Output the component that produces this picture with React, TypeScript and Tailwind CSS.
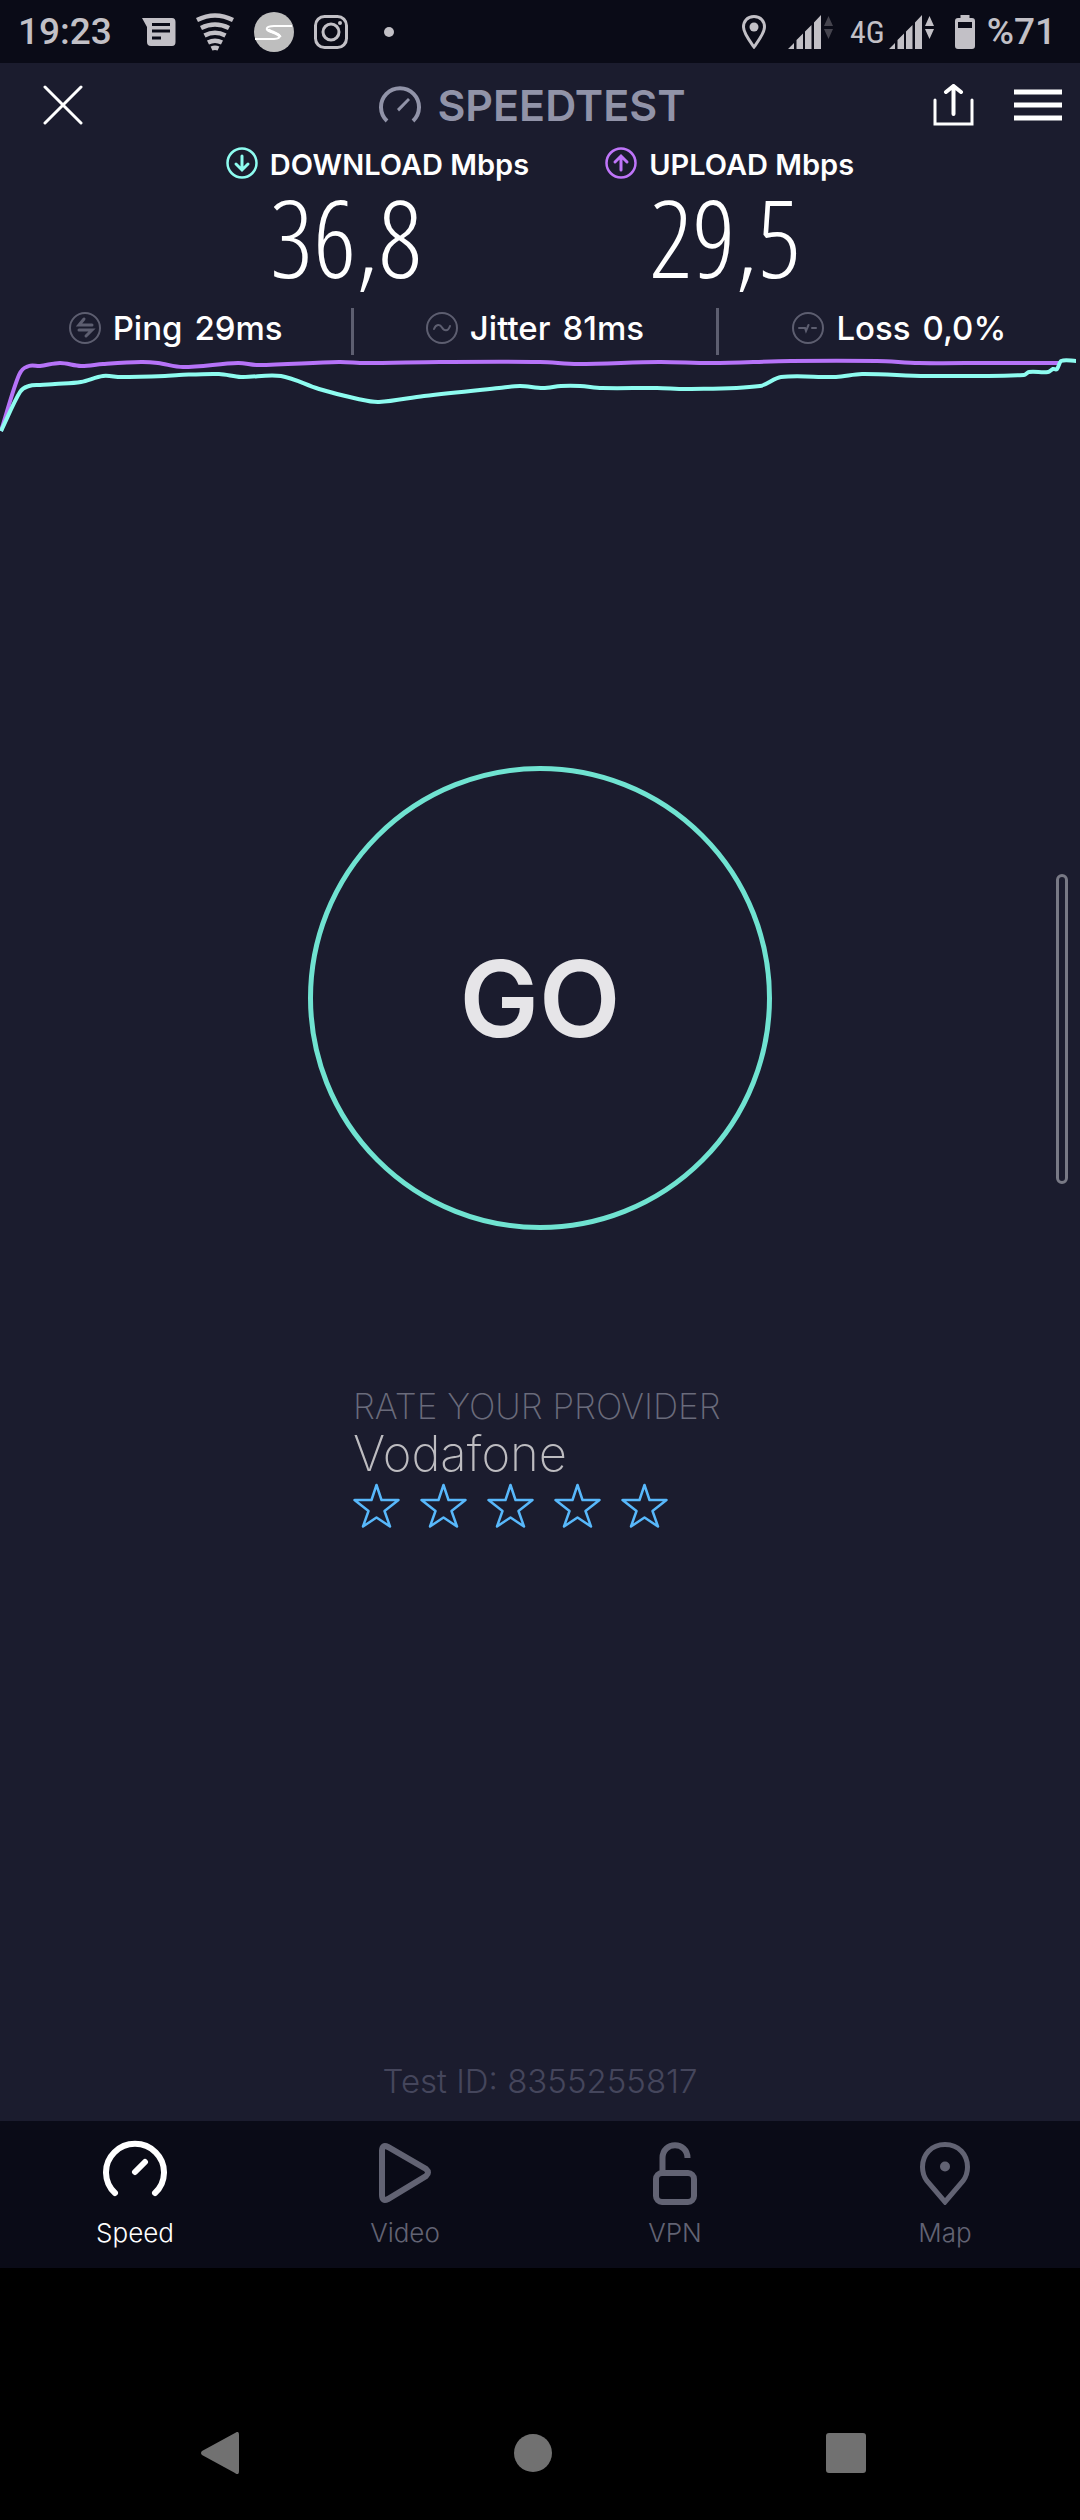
import type { ReactNode } from 'react'

type Point = [number, number]

const uploadPoints: Point[] = [
  [1, 431], [19, 375], [29, 366], [40, 366], [60, 363], [81, 366], [103, 364], [141, 362], [158, 363],
  [183, 367], [238, 363], [258, 365], [339, 362], [365, 363], [440, 362], [540, 362], [578, 364], [659, 362],
  [712, 363], [791, 361], [877, 361], [919, 363], [988, 363], [1060, 363],
]

const downloadPoints: Point[] = [
  [1, 431], [20, 392], [29, 386], [40, 385], [55, 384], [81, 382], [103, 376], [121, 377], [165, 376],
  [179, 375], [219, 374], [241, 377], [281, 376], [319, 389], [358, 399], [379, 402], [424, 396], [499, 388],
  [520, 386], [543, 388], [561, 386], [580, 386], [602, 388], [657, 388], [688, 389], [760, 386], [781, 377],
  [836, 377], [862, 374], [926, 376], [1024, 375], [1029, 372], [1048, 372], [1053, 369], [1057, 369],
  [1061, 361], [1076, 361],
]

function smoothPath(points: Point[]) {
  let d = `M${points[0][0]} ${points[0][1]}`
  for (let i = 1; i < points.length; i++) {
    const [x0, y0] = points[i - 1]
    const [x1, y1] = points[i]
    const dx = (x1 - x0) / 3
    const before = points[Math.max(i - 2, 0)]
    const after = points[Math.min(i + 1, points.length - 1)]
    const s0 = (y1 - before[1]) / (x1 - before[0])
    const s1 = (after[1] - y0) / (after[0] - x0)
    d += `C${x0 + dx} ${y0 + s0 * dx} ${x1 - dx} ${y1 - s1 * dx} ${x1} ${y1}`
  }
  return d
}

function SignalIcon({ active }: { active: boolean }) {
  return (
    <svg width="46" height="34" viewBox="0 0 46 34" fill="#c2c0c6" aria-hidden="true">
      <path d="M0 34L6 28V34ZM8.500 34V25L15 18.500V34ZM17 34V16.500L23.500 10V34ZM26 34V7.500L33 0V34Z" />
      <path d="M40.500 1L45 11H36ZM36 14H45L40.500 24Z" fill={active ? '#c2c0c6' : '#45444e'} />
    </svg>
  )
}

function StatusBar() {
  return (
    <div className="flex h-[63px] items-center bg-[#0a0b17] pl-[18px] pr-6 font-[Roboto,sans-serif] text-[37px] font-medium leading-none text-[#c2c0c6]">
      <span>19:23</span>
      <svg className="ml-[30px]" width="34" height="28" viewBox="0 0 34 28" aria-hidden="true">
        <path d="M0 0H30Q33.500 0 33.500 4V24Q33.500 28 30 28H9Q5 28 5 24V9Z" fill="#c2c0c6" />
        <path d="M10 6.500H28M10 13H28M10 20H19" stroke="#0a0b17" strokeWidth="3" />
      </svg>
      <svg className="ml-5" width="38" height="38" viewBox="0 0 38 38" fill="none" stroke="#c2c0c6" strokeWidth="4.500" aria-hidden="true">
        <path d="M1 7Q19 -2 37 7M5 15Q19 8 33 15M8.500 22.500Q19 17 29.500 22.500M12 29.500Q19 26 26 29.500M15.500 35.500Q19 34 22.500 35.500" />
      </svg>
      <svg className="ml-5" width="40" height="40" viewBox="0 0 40 40" aria-hidden="true">
        <circle cx="20" cy="20" r="20" fill="#bebebe" />
        <path d="M38 14H20C12 14 10 18 17 20C27 22 29 26 20 27H1" fill="none" stroke="#fff" strokeWidth="2" />
        <path d="M14 17C14 19 26 22 26 25" fill="none" stroke="#fff" strokeWidth="3" />
      </svg>
      <svg className="ml-5" width="34" height="34" viewBox="0 0 34 34" fill="none" stroke="#c2c0c6" strokeWidth="3" aria-hidden="true">
        <rect x="1.500" y="1.500" width="31" height="31" rx="9" />
        <circle cx="17" cy="17" r="8" />
        <circle cx="26" cy="8" r="2" fill="#c2c0c6" stroke="none" />
      </svg>
      <span className="ml-9 size-[10px] rounded-full bg-[#c2c0c6]" />

      <svg className="ml-auto" width="24" height="34" viewBox="0 0 24 34" aria-hidden="true">
        <path d="M12 1.500C5 1.500 1.500 6.500 1.500 12C1.500 18 7 25 12 32C17 25 22.500 18 22.500 12C22.500 6.500 19 1.500 12 1.500Z" fill="none" stroke="#c2c0c6" strokeWidth="3" />
        <circle cx="12" cy="12" r="4.500" fill="#c2c0c6" />
      </svg>
      <span className="ml-[22px]"><SignalIcon active={false} /></span>
      <span className="ml-4 font-['Roboto_Condensed',Roboto,sans-serif] text-[32px] font-normal">4G</span>
      <span className="ml-1"><SignalIcon active /></span>
      <svg className="ml-5" width="20" height="34" viewBox="0 0 20 34" fill="#c2c0c6" aria-hidden="true">
        <path fillRule="evenodd" d="M5.500 0H14.500V3H17Q20 3 20 6V31Q20 34 17 34H3Q0 34 0 31V6Q0 3 3 3H5.500ZM3 7V13H17V7Z" />
      </svg>
      <span className="ml-3">%71</span>
    </div>
  )
}

function Header() {
  return (
    <header className="flex h-[84px] items-center pl-[43px] pr-[18px]">
      <div className="flex-1">
        <button aria-label="Close" className="block">
          <svg width="40" height="40" viewBox="0 0 40 40" stroke="#fff" strokeWidth="3" strokeLinecap="round">
            <path d="M2 2L38 38M38 2L2 38" />
          </svg>
        </button>
      </div>
      <h1 className="flex items-center gap-4 pr-10 text-[43px] font-semibold leading-none text-[#9193a8]">
        <svg width="42" height="38" viewBox="0 0 42 38" fill="none" stroke="#9193a8" strokeWidth="4" aria-hidden="true">
          <path d="M8 35A19 19 0 1 1 34 35" />
          <path d="M18 23L29 12L31 14L20 25.500Z" fill="#9193a8" stroke="none" />
        </svg>
        SPEEDTEST
      </h1>
      <div className="flex flex-1 justify-end gap-10">
        <button aria-label="Share">
          <svg width="41" height="42" viewBox="0 0 41 42" fill="none" stroke="#fff" strokeWidth="4" strokeLinecap="round">
            <path d="M2 16V40H39V16" strokeWidth="3" />
            <path d="M20.500 30V3M13 8L20.500 2L28 8" />
          </svg>
        </button>
        <button aria-label="Menu">
          <svg width="48" height="34" viewBox="0 0 48 34" stroke="#fff" strokeWidth="5">
            <path d="M0 4H48M0 17H48M0 30H48" />
          </svg>
        </button>
      </div>
    </header>
  )
}

function SpeedResult({ label, value, color, arrow }: { label: string; value: string; color: string; arrow: string }) {
  return (
    <div className="flex gap-3">
      <svg width="32" height="32" viewBox="0 0 32 32" fill="none" stroke={color} strokeWidth="3" strokeLinecap="round" aria-hidden="true">
        <circle cx="16" cy="16" r="14.500" strokeWidth="2.500" />
        <path d={arrow} />
      </svg>
      <div>
        <h2 className="text-[29px] font-semibold leading-9">{label} Mbps</h2>
        <p className="pb-3 font-['Open_Sans_Condensed_Light','Roboto_Condensed',Roboto,sans-serif] text-[108px] font-thin leading-[108px]">{value}</p>
      </div>
    </div>
  )
}

function Stat({ label, value, children }: { label: string; value: string; children: ReactNode }) {
  return (
    <div className="flex items-center justify-center gap-3 pb-[11px] text-[33px] font-medium leading-8">
      <svg width="32" height="32" viewBox="0 0 32 32" fill="none" stroke="#5d5e70" strokeWidth="2" strokeLinecap="round" aria-hidden="true">
        <circle cx="16" cy="16" r="15" />
        {children}
      </svg>
      <span>{label}</span>
      <span>{value}</span>
    </div>
  )
}

function Tab({ label, active = false, children }: { label: string; active?: boolean; children: ReactNode }) {
  return (
    <a href="#" className={`flex flex-1 flex-col items-center gap-3 pt-[18px] text-[26px] font-light leading-8 ${active ? 'text-white' : 'text-[#626373]'}`}>
      <svg width="64" height="66" viewBox="0 0 64 66" fill="none" stroke="currentColor" strokeWidth="6" aria-hidden="true">
        {children}
      </svg>
      {label}
    </a>
  )
}

export default function App() {
  return (
    <div className="flex min-h-screen flex-col bg-[#1b1c2e] font-[Inter,sans-serif] text-white">
      <StatusBar />
      <Header />

      <section className="flex justify-center gap-[76px]">
        <SpeedResult label="DOWNLOAD" value="36,8" color="#8efcf0" arrow="M16 9V22M10 17L16 23L22 17" />
        <SpeedResult label="UPLOAD" value="29,5" color="#bf75f9" arrow="M16 23V10M10 15L16 9L22 15" />
      </section>

      <section className="grid h-[52px] grid-cols-[35fr_3px_36fr_3px_36fr] items-end">
        <Stat label="Ping" value="29ms">
          <path d="M23 13H10L15 7M10 18H23L17 24" strokeWidth="3" />
        </Stat>
        <span className="h-[47px] bg-[#5d5e70]" />
        <Stat label="Jitter" value="81ms">
          <path d="M8 17C10 12 14 12 16 15.500S22 20 24 14" />
        </Stat>
        <span className="h-[47px] bg-[#5d5e70]" />
        <Stat label="Loss" value="0,0%">
          <path d="M7 16H13L14 19L16.500 13M20 16H24" />
        </Stat>
      </section>

      <svg className="w-full" viewBox="0 355 1080 80" fill="none" strokeWidth="4" role="img" aria-label="Speed history">
        <path d={smoothPath(uploadPoints)} stroke="#b673f8" />
        <path d={smoothPath(downloadPoints)} stroke="#8efcf0" />
      </svg>

      <main className="relative flex flex-1 flex-col items-center pt-[331px]">
        <button className="size-[464px] rounded-full border-[5px] border-[#70e3d1] text-[106px] font-semibold text-[#e6e5e8]">
          GO
        </button>
        <div className="absolute right-3 top-[439px] h-[310px] w-3 rounded-full border-3 border-[#787985]" />

        <div className="mt-[156px] w-[374px] whitespace-nowrap">
          <p className="text-[35px] font-extralight leading-10 text-[#6a6b7b]">RATE YOUR PROVIDER</p>
          <p className="text-[49px] font-extralight leading-[56px] text-[#bdbcc0]">Vodafone</p>
          <div className="flex gap-5">
            {[1, 2, 3, 4, 5].map((n) => (
              <button key={n} aria-label={`${n} stars`}>
                <svg width="47" height="46" viewBox="0 0 47 46" fill="none" stroke="#58b8fb" strokeWidth="2.500" strokeLinejoin="round">
                  <path d="M23.500 3L28.500 18H45.500L31.500 29L37 44.500L23.500 35.500L10 44.500L15.500 29L1.500 18H18.500Z" />
                </svg>
              </button>
            ))}
          </div>
        </div>

        <p className="mt-auto pb-5 text-[33px] font-light leading-10 text-[#45465c]">Test ID: 8355255817</p>
      </main>

      <nav className="flex h-[147px] bg-[#0a0b17]">
        <Tab label="Speed" active>
          <path d="M12 54A29 28.500 0 1 1 52 54M32 33L42 23" strokeLinecap="round" />
        </Tab>
        <Tab label="Video">
          <path d="M9 12Q9 5 15 8L53 30Q57 33.500 53 37L15 60Q9 63 9 56Z" />
        </Tab>
        <Tab label="VPN">
          <rect x="13" y="34" width="38" height="29" rx="6" />
          <path d="M19.500 34V19C19.500 2 44.500 2 44.500 19" />
        </Tab>
        <Tab label="Map">
          <path d="M32 5.500C18 5.500 9.500 16 9.500 28C9.500 34 11 38 14 42L32 63L50 42C53 38 54.500 34 54.500 28C54.500 16 46 5.500 32 5.500Z" strokeWidth="5" />
          <circle cx="32" cy="27.500" r="5" fill="currentColor" stroke="none" />
        </Tab>
      </nav>

      <div className="flex h-[252px] items-end bg-black pb-[46px] pl-16 pr-[78px]">
        <button aria-label="Back" className="flex flex-1 justify-center">
          <svg width="38" height="42" viewBox="0 0 38 42" fill="#717171">
            <path d="M34 1Q38 -2 38 3V39Q38 44 34 41L1 23Q-1 21 1 19Z" />
          </svg>
        </button>
        <button aria-label="Home" className="flex flex-1 justify-center">
          <svg width="38" height="42" viewBox="0 0 38 42" fill="#717171">
            <circle cx="19" cy="21" r="19" />
          </svg>
        </button>
        <button aria-label="Recent apps" className="flex flex-1 justify-center">
          <svg width="40" height="42" viewBox="0 0 40 42" fill="#717171">
            <rect y="1" width="40" height="40" rx="3" />
          </svg>
        </button>
      </div>
    </div>
  )
}
